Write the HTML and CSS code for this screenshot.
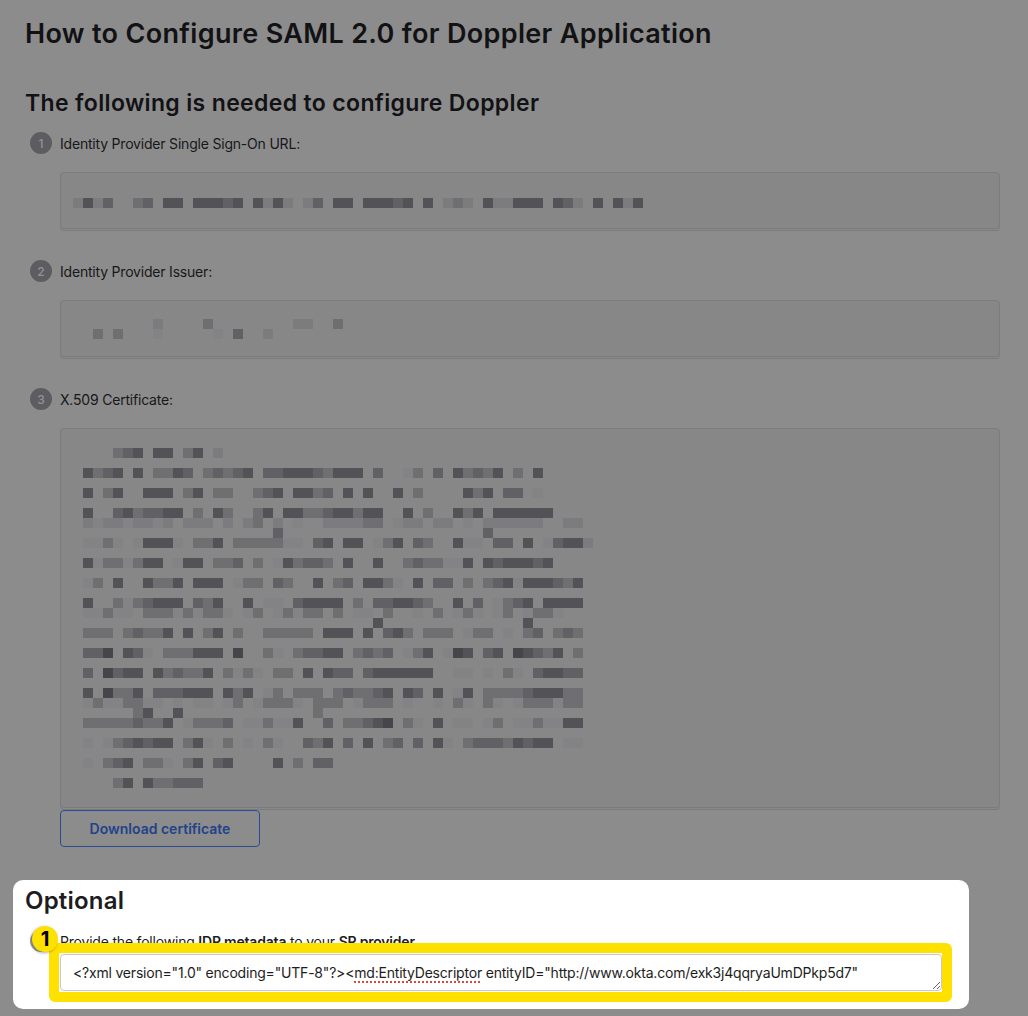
FILE: index.html
```html
<!DOCTYPE html>
<html lang="en">
<head>
<meta charset="utf-8">
<title>How to Configure SAML 2.0 for Doppler Application</title>
<link rel="stylesheet" href="styles.css">
</head>
<body>
<main class="page">
  <h1 class="title">How to Configure SAML 2.0 for Doppler Application</h1>
  <h2 class="subtitle">The following is needed to configure Doppler</h2>
  <ol class="steps">
    <li class="step">
      <div class="step-head"><span class="num">1</span><span class="label">Identity Provider Single Sign-On URL:</span></div>
      <div class="field field-sso">
        <div class="rrow" data-cells="adac  bc dd dddcd dada ac dd dddcd d aba daaddd dca d dad"></div>
      </div>
    </li>
    <li class="step">
      <div class="step-head"><span class="num">2</span><span class="label">Identity Provider Issuer:</span></div>
      <div class="field field-issuer">
        <div class="rrow" data-cells="        a    b        aa  b"></div>
        <div class="rrow" data-cells="  b b   z     z c  a"></div>
      </div>
    </li>
    <li class="step">
      <div class="step-head"><span class="num">3</span><span class="label">X.509 Certificate:</span></div>
      <div class="field field-cert">
        <div class="rrow" data-cells="    bcd dd bd a"></div>
        <div class="rrow" data-cells=""></div>
        <div class="rrow" data-cells=" dbcd d bbdc bcbcd ccdddcbddd c  zb c dbcbd b d"></div>
        <div class="rrow" data-cells=""></div>
        <div class="rrow" data-cells=" d bd  ddd bd bb  bcd ddbc d d  d b    dbd cc z"></div>
        <div class="rrow" data-cells=""></div>
        <div class="rrow" data-cells=" d  cdbccdd b db  bd ddbbcddbdd  d b  dbd dddddd"></div>
        <div class="rrow" data-cells=" azaazaaza aaa a ab a z  aaaabb zaa aa z aaaaaa  aa"></div>
        <div class="rrow" data-cells="                    c                    c"></div>
        <div class="rrow" data-cells=" zzbz zdddz bbd bbbbbzz cd dd zbd cb  dzz cc d zcdda"></div>
        <div class="rrow" data-cells=""></div>
        <div class="rrow" data-cells=" dzbbzbdd zdd bbc b zdbccb d  d  bcbbzzd dcdddcd"></div>
        <div class="rrow" data-cells=""></div>
        <div class="rrow" data-cells=" zb d  dbbd ddd zbb cb  d bc ddbz d cc b bcdzdddcbd"></div>
        <div class="rrow" data-cells=""></div>
        <div class="rrow" data-cells=" d  bzbcddd cbd  d zz cdddd b ccddcb  d c zbcd dddd"></div>
        <div class="rrow" data-cells=" zzbzz bbbzbzbbz zb zbzbb b zz b  z b zbz zb zbbz"></div>
        <div class="rrow" data-cells="                              d              d"></div>
        <div class="rrow" data-cells=" bbb bcbbd d bd b  bbbbb ddd d cdb bbb zbb z bc bcb"></div>
        <div class="rrow" data-cells=""></div>
        <div class="rrow" data-cells=" cce dcz bbbddd e  bz bccdd bcbc zbd zed cd edcbd b"></div>
        <div class="rrow" data-cells=""></div>
        <div class="rrow" data-cells=" c ecdd dbcbbd bzbz bb d dcc cdddddd  zz z bz cddcc"></div>
        <div class="rrow" data-cells=""></div>
        <div class="rrow" data-cells=" d ebbd cccddd dbd zb bbb bcbbcd dc d zd bbbbcdddbb"></div>
        <div class="rrow" data-cells=" zbzzbbzz z zz zb zbbbz bbb zbbb z  z bz bz zbbbzbb"></div>
        <div class="rrow" data-cells="      bd  d             b"></div>
        <div class="rrow" data-cells=" bbbbbcbbd zbbbc zzbzzd  c bbcde bz d zz zb zzbzzdd"></div>
        <div class="rrow" data-cells=""></div>
        <div class="rrow" data-cells=" z zbcdcdd bdz b z bz  cbd c d bc c dz bcccbdcdd zz"></div>
        <div class="rrow" data-cells=""></div>
        <div class="rrow" data-cells=" z bcd bbz bd cd    d b cc"></div>
        <div class="rrow" data-cells=""></div>
        <div class="rrow" data-cells="    bd dbbccc"></div>
      </div>
      <button class="btn" type="button">Download certificate</button>
    </li>
  </ol>

  <section class="optional">
    <h2 class="optional-title">Optional</h2>
    <div class="opt-step">
      <div class="step-head">
        <span class="num num-light"></span>
        <span class="badge">1</span>
        <span class="label">Provide the following <b>IDP metadata</b> to your <b>SP provider</b></span>
      </div>
      <div class="meta">
        <div class="meta-box">&lt;?xml version="1.0" encoding="UTF-8"?&gt;&lt;<span class="spell">md:EntityDescriptor</span> entityID="http://www.okta.com/exk3j4qqryaUmDPkp5d7"</div>
      </div>
    </div>
  </section>
</main>
<script src="script.js"></script>
</body>
</html>
```

FILE: styles.css
```css
* { box-sizing: border-box; }

html, body {
  margin: 0;
  padding: 0;
}

body {
  width: 1028px;
  height: 1016px;
  overflow: hidden;
  background: #8c8c8c;
  font-family: Inter, "Noto Sans", "Liberation Sans", sans-serif;
  color: #131315;
}

.page {
  padding: 0 28px 0 25px;
}

.title {
  margin: 18px 0 0;
  font-size: 27px;
  line-height: 32px;
  font-weight: 600;
  letter-spacing: 0.33px;
  color: #121214;
}

.subtitle {
  margin: 39px 0 0;
  font-size: 23px;
  line-height: 28px;
  font-weight: 600;
  letter-spacing: 0.35px;
  color: #121214;
}

.steps {
  list-style: none;
  margin: 0;
  padding: 0;
}

.step {
  margin-top: 31px;
}

.steps .step:first-child {
  margin-top: 15px;
}

.step-head {
  position: relative;
  display: flex;
  align-items: center;
  gap: 8px;
  height: 22px;
  margin-left: 5px;
}

.num {
  flex: none;
  width: 22px;
  height: 22px;
  border-radius: 50%;
  background: #5c5c61;
  color: #929295;
  font-size: 12px;
  font-weight: 500;
  display: flex;
  align-items: center;
  justify-content: center;
}

.label {
  font-size: 14px;
  letter-spacing: -0.2px;
  color: #18181a;
  white-space: nowrap;
}

.field {
  margin: 18px 0 0 35px;
  border: 1px solid #7b7b7d;
  border-radius: 4px;
  background: #878787;
  box-shadow: 0 1px 0 #898989, 0 2px 0 #7b7b7d;
  padding: 0 12px;
  display: flex;
  flex-direction: column;
}

.field-sso {
  height: 57px;
  padding-top: 25px;
}

.field-issuer {
  height: 57px;
  padding-top: 18px;
}

.field-cert {
  height: 380px;
  padding-top: 19px;
}

.rrow {
  display: flex;
  height: 10px;
}

.px {
  flex: none;
  width: 10px;
  height: 10px;
}

.px-z { background: #838385; }
.px-a { background: #7c7c7e; }
.px-b { background: #6f6f72; }
.px-c { background: #616165; }
.px-d { background: #525257; }
.px-e { background: #45454a; }

.btn {
  display: flex;
  align-items: center;
  justify-content: center;
  margin: 2px 0 0 35px;
  width: 200px;
  height: 37px;
  padding: 0;
  border: 1px solid #2b4c92;
  border-radius: 4px;
  background: transparent;
  color: #22428a;
  font-family: Inter, "Noto Sans", "Liberation Sans", sans-serif;
  font-size: 14px;
  font-weight: 600;
}

.optional {
  margin: 33px 0 0 -12px;
  width: 956px;
  padding: 6px 27px 18px 12px;
  background: #ffffff;
  border-radius: 10px;
}

.optional-title {
  margin: 0;
  font-size: 24px;
  line-height: 29px;
  font-weight: 600;
  letter-spacing: 0.2px;
  color: #1d1d21;
}

.opt-step {
  margin-top: 15px;
}

.opt-step .label {
  color: #1d1d21;
}

.opt-step .label b {
  font-weight: 600;
}

.num-light {
  background: #a3a3aa;
}

.badge {
  position: absolute;
  left: 2px;
  top: -4px;
  z-index: 2;
  width: 26px;
  height: 26px;
  border-radius: 50%;
  background: #ffe100;
  color: #000000;
  font-size: 20px;
  font-weight: 700;
  display: flex;
  align-items: center;
  justify-content: center;
  box-shadow: -1px 1px 3px rgba(0, 0, 0, 0.35);
}

.meta {
  position: relative;
  margin: 2px 0 0 35px;
  width: 882px;
}

.meta::before {
  content: "";
  position: absolute;
  left: -11px;
  top: -11px;
  right: -10px;
  bottom: -11px;
  z-index: 1;
  border: 10px solid #ffe100;
  border-radius: 6px;
}

.meta-box {
  height: 37px;
  padding: 0 12px;
  border: 1px solid #c8c8ce;
  border-radius: 4px;
  background: #ffffff;
  color: #1d1d21;
  font-size: 14px;
  line-height: 35px;
  letter-spacing: -0.2px;
  white-space: nowrap;
  overflow: hidden;
  resize: both;
}

.spell {
  text-decoration: underline dotted #e0443e;
  text-decoration-thickness: 2px;
  text-underline-offset: 3px;
}
```

FILE: script.js
```js
document.querySelectorAll('.rrow').forEach(function (row) {
  var cells = row.getAttribute('data-cells') || '';
  for (var i = 0; i < cells.length; i++) {
    var ch = cells.charAt(i);
    var el = document.createElement('span');
    el.className = ch === ' ' ? 'px' : 'px px-' + ch;
    row.appendChild(el);
  }
});
```
